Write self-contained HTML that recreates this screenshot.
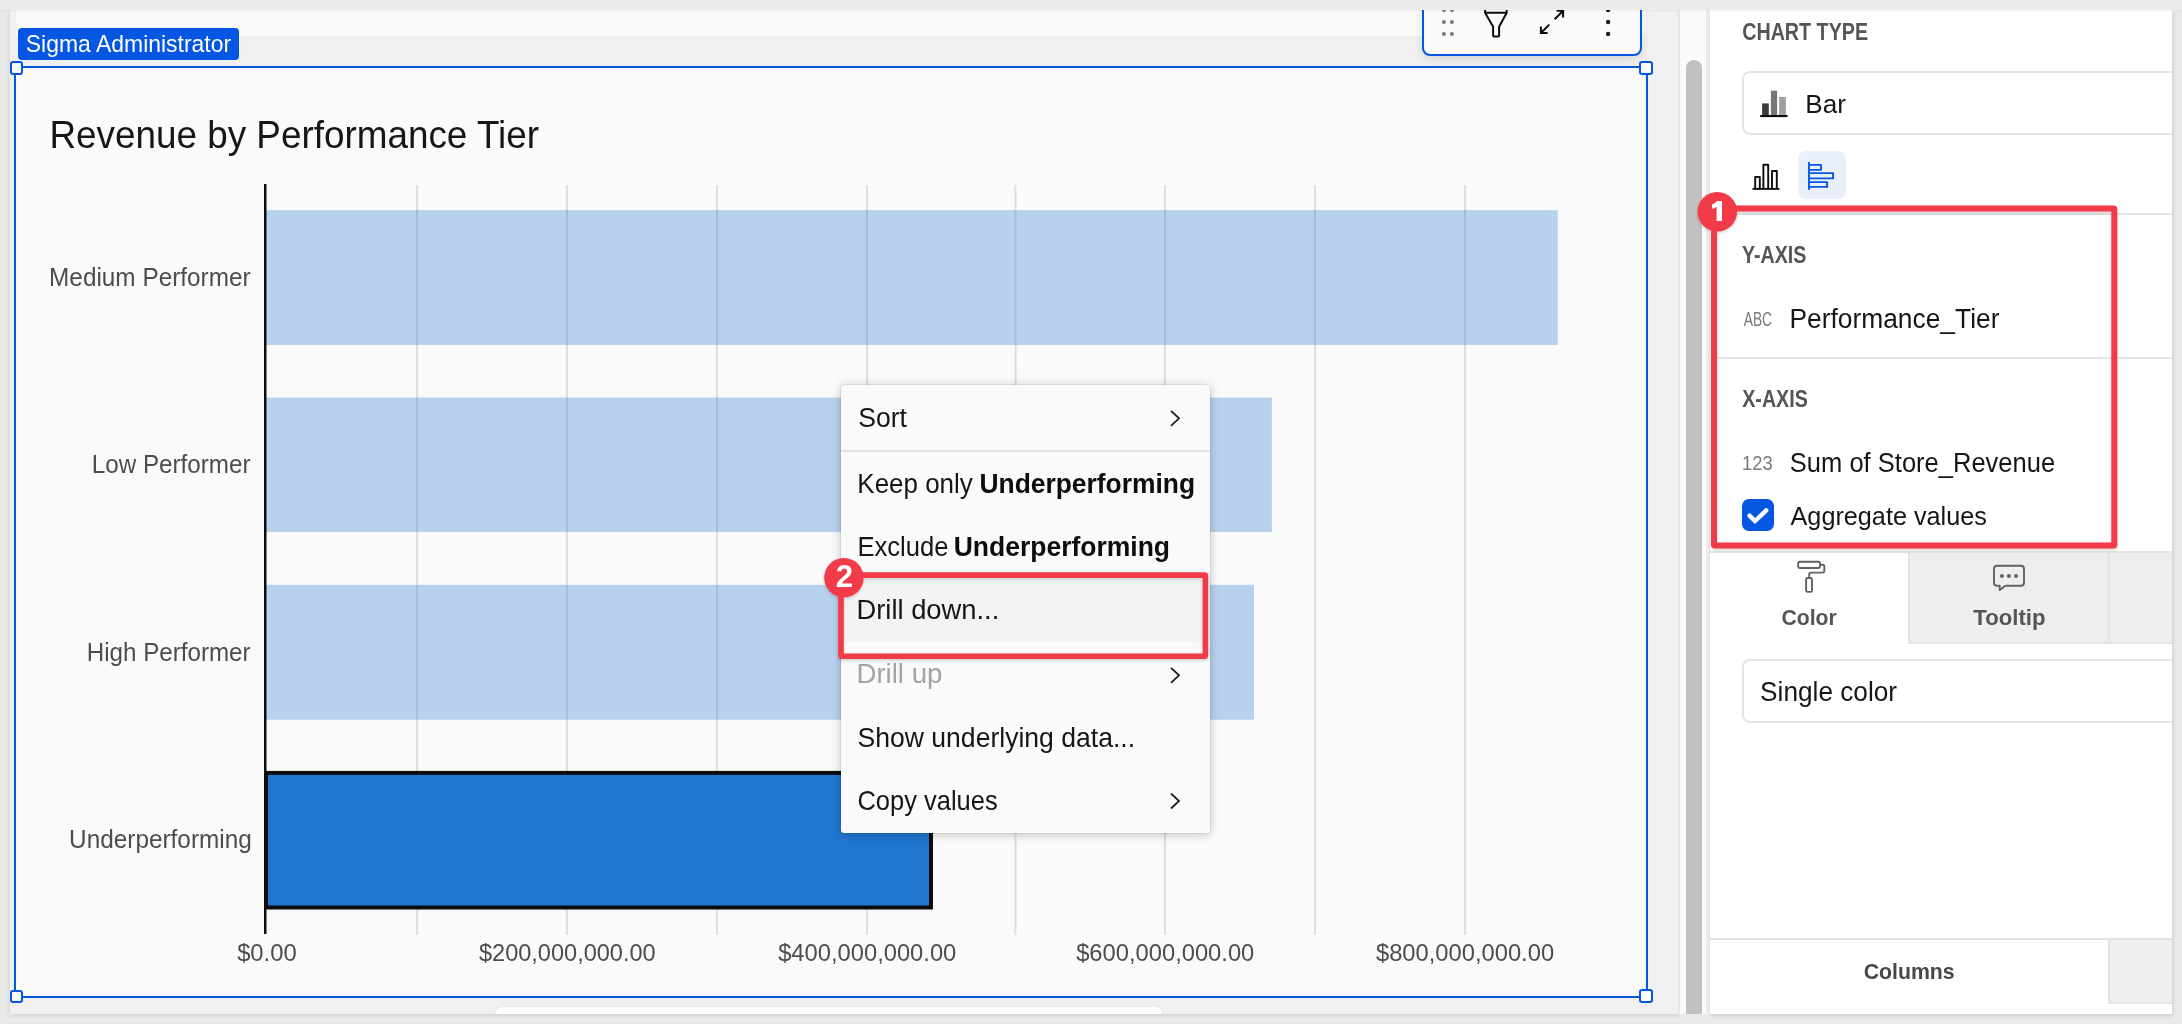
<!DOCTYPE html>
<html><head><meta charset="utf-8">
<style>
html,body{margin:0;padding:0}
body{width:2182px;height:1024px;overflow:hidden;position:relative;background:#e9e9e9;font-family:"Liberation Sans",sans-serif}
.a{position:absolute;box-sizing:border-box}
svg text{font-family:"Liberation Sans",sans-serif}
.h{position:absolute;box-sizing:border-box;width:13px;height:13px;border:2px solid #0556e3;background:#fafafa;border-radius:3px}
</style></head><body>
<!-- workbook canvas -->
<div class="a" style="left:10px;top:10px;width:1668px;height:1004px;background:#f0f0f0;box-shadow:0 1px 5px rgba(0,0,0,0.12)"></div>
<div class="a" style="left:16px;top:10px;width:1630px;height:26px;background:#fafafa;border-bottom-right-radius:8px"></div>
<div class="a" style="left:495px;top:1006.5px;width:668px;height:7.5px;background:#ffffff;border-radius:12px 12px 0 0;box-shadow:0 0 1px rgba(0,0,0,0.18)"></div>
<!-- chart card -->
<div class="a" style="left:16px;top:68px;width:1630px;height:928px;background:#fafafa"></div>

<!-- chart -->
<svg class="a" style="left:0;top:0" width="2182" height="1024">
<rect x="416.0" y="185" width="2" height="750" fill="#dedede"/>
<rect x="566.0" y="185" width="2" height="750" fill="#dedede"/>
<rect x="716.0" y="185" width="2" height="750" fill="#dedede"/>
<rect x="866.0" y="185" width="2" height="750" fill="#dedede"/>
<rect x="1014.5" y="185" width="2" height="750" fill="#dedede"/>
<rect x="1164.0" y="185" width="2" height="750" fill="#dedede"/>
<rect x="1314.0" y="185" width="2" height="750" fill="#dedede"/>
<rect x="1464.0" y="185" width="2" height="750" fill="#dedede"/>
<rect x="266" y="210.2" width="1291.8" height="134.8" fill="#2176d2" fill-opacity="0.3"/>
<rect x="266" y="397.6" width="1005.9" height="134.4" fill="#2176d2" fill-opacity="0.3"/>
<rect x="266" y="584.8" width="988" height="134.9" fill="#2176d2" fill-opacity="0.3"/>
<rect x="266" y="772.9" width="665" height="134.6" fill="#2176d2" stroke="#0d0d0d" stroke-width="4"/>
<rect x="264" y="184" width="2.5" height="750" fill="#0d0d0d"/>
</svg>

<!-- selection frame -->
<div class="a" style="left:14px;top:66px;width:1634px;height:932px;border:2px solid #0556e3"></div>
<div class="h" style="left:10px;top:61px;height:13.6px"></div>
<div class="h" style="left:1639.3px;top:61px;width:13.8px;height:14px"></div>
<div class="h" style="left:10px;top:989.5px"></div>
<div class="h" style="left:1639.3px;top:989.3px;width:13.8px;height:13.5px"></div>
<div class="a" style="left:18px;top:28px;width:221px;height:32px;background:#0556e3;border-radius:4px"></div>

<!-- element toolbar -->
<div class="a" style="left:1422px;top:-20px;width:220px;height:76px;background:#fafafa;border:2px solid #0556e3;border-radius:8px;box-shadow:0 4px 10px rgba(0,0,0,0.10)"></div>

<!-- context menu -->
<div class="a" style="left:840.5px;top:385px;width:369.5px;height:448px;background:#fafafa;border-radius:3px;box-shadow:0 0 12px rgba(0,0,0,0.13),0 3px 8px rgba(0,0,0,0.10),0 0 0 1px rgba(0,0,0,0.05);overflow:hidden">
  <div class="a" style="left:0;top:64.5px;width:370px;height:2px;background:#e2e2e2"></div>
  <div class="a" style="left:0;top:195px;width:370px;height:62px;background:#f3f3f3"></div>
</div>

<!-- scrollbar strip -->
<div class="a" style="left:1678px;top:10px;width:32px;height:1004px;background:#fafafa;border-left:2px solid #e6e6e6;border-right:4px solid #ececec"></div>
<div class="a" style="left:1686px;top:60px;width:16px;height:954px;background:#c1c1c1;border-radius:8px 8px 0 0"></div>

<!-- right panel -->
<div class="a" style="left:1710px;top:10px;width:462px;height:1004px;background:#ffffff;overflow:hidden;box-shadow:1px 2px 4px rgba(0,0,0,0.12)">
  <div class="a" style="left:32px;top:61px;width:480px;height:63.7px;border:2px solid #e4e4e4;border-radius:8px"></div>
  <div class="a" style="left:88px;top:141px;width:48px;height:48px;background:#e9f0fc;border-radius:8px"></div>
  <div class="a" style="left:0;top:202.5px;width:462px;height:2px;background:#e6e6e6"></div>
  <div class="a" style="left:0;top:347px;width:462px;height:2px;background:#e6e6e6"></div>
  <div class="a" style="left:0;top:541px;width:462px;height:2px;background:#e4e4e4"></div>
  <div class="a" style="left:198px;top:543px;width:200px;height:90.5px;background:#eeeeee;border-left:2px solid #e3e3e3;border-bottom:2px solid #e3e3e3"></div>
  <div class="a" style="left:398px;top:543px;width:64px;height:90.5px;background:#eeeeee;border-left:2px solid #e3e3e3;border-bottom:2px solid #e3e3e3"></div>
  <div class="a" style="left:32px;top:649px;width:480px;height:64px;border:2px solid #e4e4e4;border-radius:8px"></div>
  <div class="a" style="left:0;top:927.5px;width:462px;height:2px;background:#e2e2e2"></div>
  <div class="a" style="left:398px;top:929.5px;width:64px;height:64px;background:#eeeeee;border-left:2px solid #e3e3e3;border-bottom:2px solid #e3e3e3"></div>
</div>

<!-- overlay: text, icons, annotations -->
<svg class="a" style="left:0;top:0;will-change:transform" width="2182" height="1024">
<!-- toolbar icons -->
<g fill="#777777"><circle cx="1443.9" cy="10.1" r="2"/><circle cx="1451.9" cy="10.1" r="2"/><circle cx="1443.9" cy="22" r="2"/><circle cx="1451.9" cy="22" r="2"/><circle cx="1443.9" cy="33.9" r="2"/><circle cx="1451.9" cy="33.9" r="2"/></g>
<path d="M1485.1,6 V12.7 H1506.7 V6 M1485.1,12.7 L1493.1,26.8 V35.4 Q1493.1,36.4 1494.1,36.4 H1498.1 Q1499.1,36.4 1499.1,35.4 V26.8 L1506.7,12.7" fill="none" stroke="#0d0d0d" stroke-width="2.0" stroke-linejoin="round"/>
<g fill="none" stroke="#0d0d0d" stroke-width="2.0"><path d="M1556.7,10.8 H1563.1 V17.5 M1563.1,10.8 L1554.7,19.3"/><path d="M1540.9,26.5 V33 H1547.6 M1540.9,33 L1549.3,24.6"/></g>
<g fill="#1e1e1e"><circle cx="1608.1" cy="10.1" r="2.2"/><circle cx="1608.1" cy="22" r="2.2"/><circle cx="1608.1" cy="33.9" r="2.2"/></g>

<!-- menu chevrons -->
<g fill="none" stroke="#1e1e1e" stroke-width="1.8"><path d="M1171,410.8 L1179,418.3 L1171,425.8"/><path d="M1171,667.8 L1179,675.3 L1171,682.8"/><path d="M1171,793.5 L1179,801 L1171,808.5"/></g>

<!-- panel icons -->
<rect x="1762.1" y="103.4" width="6.7" height="12" fill="#3a3a3a"/>
<rect x="1770.9" y="90.7" width="6.2" height="24.7" fill="#777777"/>
<rect x="1779.1" y="96.9" width="6.8" height="18.5" fill="#a0a0a0"/>
<rect x="1760.2" y="115" width="27.3" height="2.1" fill="#0d0d0d"/>
<g fill="none" stroke="#0d0d0d" stroke-width="1.9" stroke-linejoin="round"><path d="M1752.5,188.9 H1779.4"/><path d="M1755.2,188.9 V177 H1759.8 V188.9"/><path d="M1763.4,188.9 V164.8 H1768.2 V188.9"/><path d="M1772,188.9 V171 H1776.8 V188.9"/></g>
<g fill="none" stroke="#0556e3" stroke-width="1.9" stroke-linejoin="round"><path d="M1809,162 V189.8"/><path d="M1809,164.9 H1821 V169.9 H1809"/><path d="M1809,173.1 H1833.1 V178.4 H1809"/><path d="M1809,182.1 H1827.1 V186.9 H1809"/></g>
<rect x="1742" y="499" width="32" height="32" rx="7" fill="#0556e3"/>
<path d="M1749.6,515.6 L1755,521 L1766.3,510.4" fill="none" stroke="#ffffff" stroke-width="4.4" stroke-linecap="round" stroke-linejoin="miter"/>
<g fill="none" stroke="#626262" stroke-width="1.9" stroke-linejoin="round">
<rect x="1798.2" y="561.8" width="21.8" height="6.2" rx="1.5"/><path d="M1820,564.8 H1822.5 Q1824.3,564.8 1824.3,566.6 V570.8 Q1824.3,572.6 1822.5,572.6 H1811 Q1809.2,572.6 1809.2,574.4 V578"/><rect x="1806.1" y="578" width="5.9" height="13.9" rx="1.5"/>
<path d="M1997,565.8 H2021 Q2024,565.8 2024,568.8 V582.8 Q2024,585.8 2021,585.8 H2005.5 L1999.7,590 V585.8 H1997 Q1994,585.8 1994,582.8 V568.8 Q1994,565.8 1997,565.8 Z"/>
</g>
<g fill="#626262"><circle cx="2001.9" cy="575.9" r="2"/><circle cx="2008.9" cy="575.9" r="2"/><circle cx="2016" cy="575.9" r="2"/></g>

<!-- annotations -->
<defs><filter id="sh" x="-10%" y="-10%" width="120%" height="120%"><feDropShadow dx="0" dy="1.5" stdDeviation="1.5" flood-color="#000" flood-opacity="0.18"/></filter></defs>
<g filter="url(#sh)">
<rect x="1714" y="208.5" width="400.3" height="337.1" rx="0.8" fill="none" stroke="#f23a48" stroke-width="6"/>
<circle cx="1717.3" cy="211.7" r="19.8" fill="#f23a48"/>
<rect x="841" y="575.1" width="364.4" height="81.1" rx="0.8" fill="none" stroke="#f23a48" stroke-width="5.6"/>
<circle cx="843.9" cy="577.8" r="19.7" fill="#f23a48"/>
</g>
<path d="M1711.8,205 L1717.3,201 H1722 V221 H1716.6 V206.8 L1712.6,209.2 Z" fill="#ffffff"/>

<text x="25.76" y="52.20" font-size="24.27" font-weight="normal" fill="#ffffff" textLength="205.41" lengthAdjust="spacingAndGlyphs" >Sigma Administrator</text>
<text x="49.39" y="148.40" font-size="39.24" font-weight="normal" fill="#161616" textLength="489.62" lengthAdjust="spacingAndGlyphs" >Revenue by Performance Tier</text>
<text x="49.10" y="285.80" font-size="24.86" font-weight="normal" fill="#4d4d4d" textLength="201.50" lengthAdjust="spacingAndGlyphs" >Medium Performer</text>
<text x="91.71" y="473.10" font-size="24.86" font-weight="normal" fill="#4d4d4d" textLength="158.89" lengthAdjust="spacingAndGlyphs" >Low Performer</text>
<text x="86.72" y="661.00" font-size="24.86" font-weight="normal" fill="#4d4d4d" textLength="163.88" lengthAdjust="spacingAndGlyphs" >High Performer</text>
<text x="69.12" y="848.00" font-size="24.86" font-weight="normal" fill="#4d4d4d" textLength="182.65" lengthAdjust="spacingAndGlyphs" >Underperforming</text>
<text x="237.14" y="961.20" font-size="24.42" font-weight="normal" fill="#4d4d4d" textLength="59.59" lengthAdjust="spacingAndGlyphs" >$0.00</text>
<text x="478.95" y="961.20" font-size="24.42" font-weight="normal" fill="#4d4d4d" textLength="176.77" lengthAdjust="spacingAndGlyphs" >$200,000,000.00</text>
<text x="778.15" y="961.20" font-size="24.42" font-weight="normal" fill="#4d4d4d" textLength="178.18" lengthAdjust="spacingAndGlyphs" >$400,000,000.00</text>
<text x="1076.15" y="961.20" font-size="24.42" font-weight="normal" fill="#4d4d4d" textLength="178.18" lengthAdjust="spacingAndGlyphs" >$600,000,000.00</text>
<text x="1375.95" y="961.20" font-size="24.42" font-weight="normal" fill="#4d4d4d" textLength="178.18" lengthAdjust="spacingAndGlyphs" >$800,000,000.00</text>
<text x="858.29" y="427.10" font-size="26.89" font-weight="normal" fill="#161616" textLength="48.70" lengthAdjust="spacingAndGlyphs" >Sort</text>
<text x="857.37" y="493.00" font-size="26.89" font-weight="normal" fill="#161616" textLength="115.38" lengthAdjust="spacingAndGlyphs" >Keep only</text>
<text x="979.51" y="493.00" font-size="26.89" font-weight="bold" fill="#0d0d0d" textLength="215.55" lengthAdjust="spacingAndGlyphs" >Underperforming</text>
<text x="857.40" y="555.70" font-size="26.89" font-weight="normal" fill="#161616" textLength="91.04" lengthAdjust="spacingAndGlyphs" >Exclude</text>
<text x="953.71" y="555.70" font-size="26.89" font-weight="bold" fill="#0d0d0d" textLength="216.36" lengthAdjust="spacingAndGlyphs" >Underperforming</text>
<text x="856.46" y="618.80" font-size="26.89" font-weight="normal" fill="#161616" textLength="142.84" lengthAdjust="spacingAndGlyphs" >Drill down...</text>
<text x="856.43" y="682.50" font-size="26.89" font-weight="normal" fill="#a3a3a3" textLength="86.03" lengthAdjust="spacingAndGlyphs" >Drill up</text>
<text x="857.49" y="746.70" font-size="26.89" font-weight="normal" fill="#161616" textLength="277.63" lengthAdjust="spacingAndGlyphs" >Show underlying data...</text>
<text x="857.41" y="809.60" font-size="26.89" font-weight="normal" fill="#161616" textLength="140.32" lengthAdjust="spacingAndGlyphs" >Copy values</text>
<text x="1742.19" y="39.90" font-size="23.11" font-weight="bold" fill="#555555" textLength="125.88" lengthAdjust="spacingAndGlyphs" >CHART TYPE</text>
<text x="1805.26" y="112.50" font-size="26.16" font-weight="normal" fill="#161616" textLength="40.68" lengthAdjust="spacingAndGlyphs" >Bar</text>
<text x="1741.97" y="262.90" font-size="23.11" font-weight="bold" fill="#555555" textLength="64.38" lengthAdjust="spacingAndGlyphs" >Y-AXIS</text>
<text x="1789.45" y="327.70" font-size="27.18" font-weight="normal" fill="#161616" textLength="209.99" lengthAdjust="spacingAndGlyphs" >Performance_Tier</text>
<text x="1742.23" y="407.20" font-size="23.11" font-weight="bold" fill="#555555" textLength="65.54" lengthAdjust="spacingAndGlyphs" >X-AXIS</text>
<text x="1789.84" y="471.50" font-size="26.89" font-weight="normal" fill="#161616" textLength="265.29" lengthAdjust="spacingAndGlyphs" >Sum of Store_Revenue</text>
<text x="1790.55" y="524.80" font-size="26.45" font-weight="normal" fill="#161616" textLength="196.26" lengthAdjust="spacingAndGlyphs" >Aggregate values</text>
<text x="1781.43" y="625.00" font-size="21.95" font-weight="bold" fill="#555555" textLength="55.39" lengthAdjust="spacingAndGlyphs" >Color</text>
<text x="1973.26" y="625.00" font-size="21.95" font-weight="bold" fill="#555555" textLength="72.23" lengthAdjust="spacingAndGlyphs" >Tooltip</text>
<text x="1760.11" y="700.90" font-size="27.33" font-weight="normal" fill="#161616" textLength="136.93" lengthAdjust="spacingAndGlyphs" >Single color</text>
<text x="1863.63" y="979.00" font-size="22.38" font-weight="bold" fill="#474747" textLength="91.05" lengthAdjust="spacingAndGlyphs" >Columns</text>
<text x="1743.67" y="325.70" font-size="19.91" font-weight="normal" fill="#7a7a7a" textLength="28.45" lengthAdjust="spacingAndGlyphs" >ABC</text>
<text x="1742.10" y="470.00" font-size="19.91" font-weight="normal" fill="#7a7a7a" textLength="30.71" lengthAdjust="spacingAndGlyphs" >123</text>
<text x="835.72" y="587.00" font-size="30.52" font-weight="bold" fill="#ffffff" textLength="17.33" lengthAdjust="spacingAndGlyphs" >2</text>
</svg>
<!-- app chrome top edge -->
<div class="a" style="left:0;top:0;width:2182px;height:10px;background:#ebebeb;box-shadow:0 1px 1px rgba(0,0,0,0.04)"></div>
</body></html>
